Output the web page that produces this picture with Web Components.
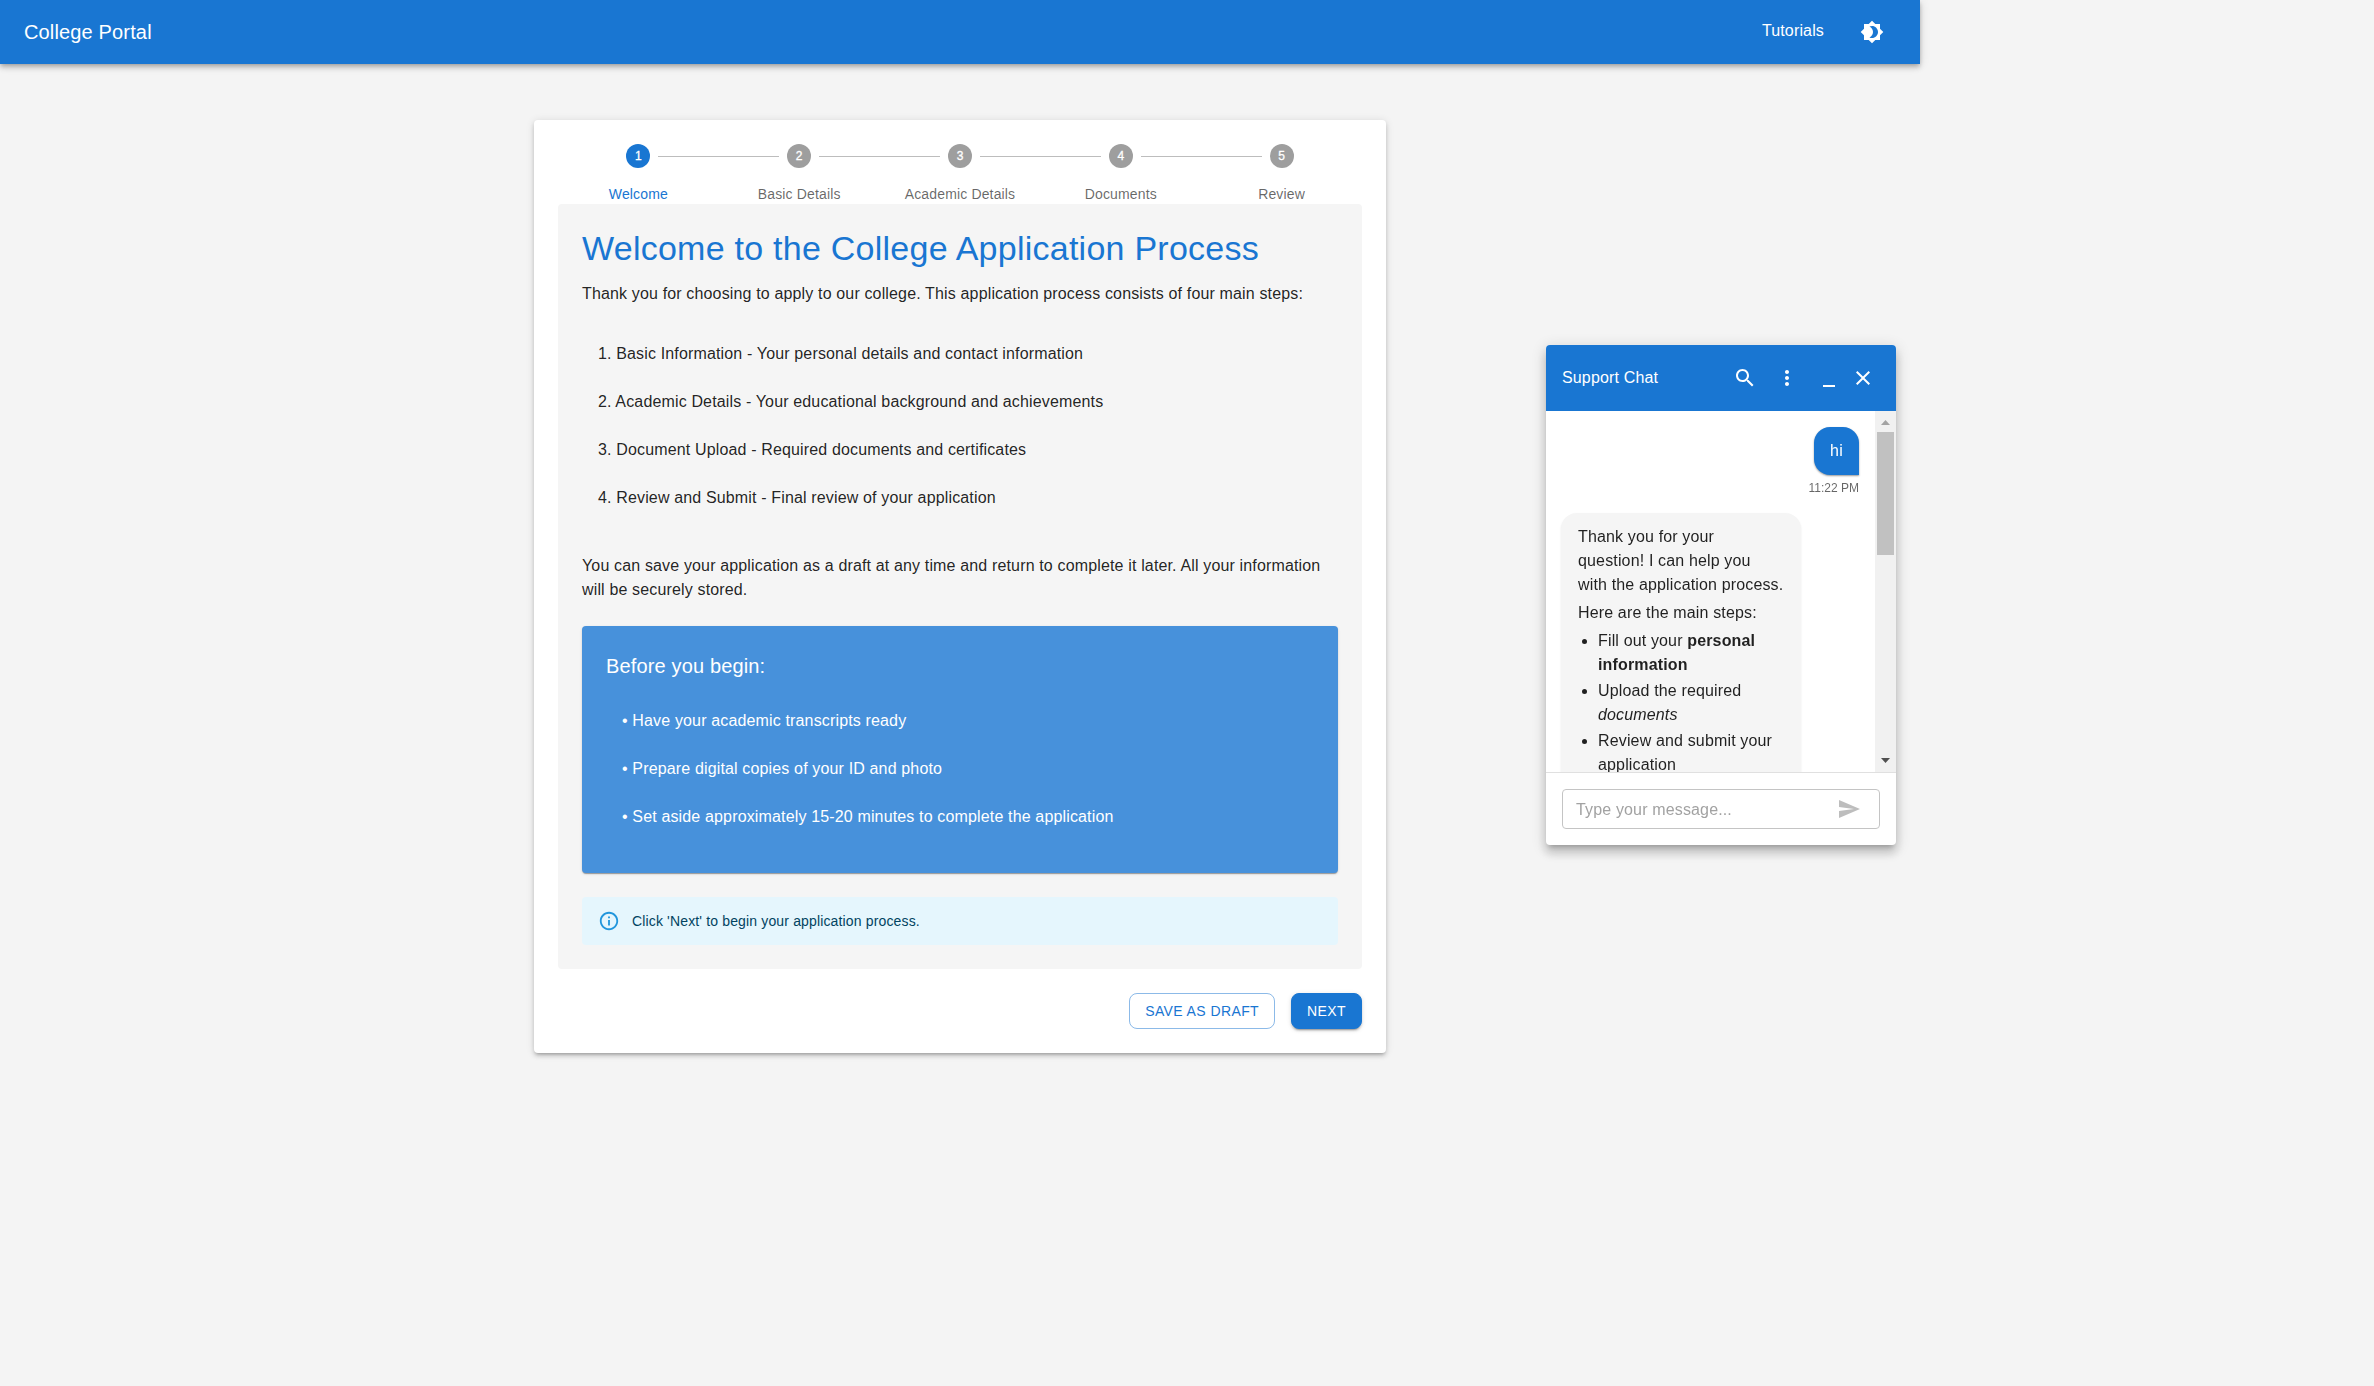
<!DOCTYPE html>
<html lang="en">
<head>
<meta charset="utf-8">
<title>College Portal</title>
<style>
html,body{margin:0;height:100%;background:#f4f4f4}
body{font:400 16px/24px "Liberation Sans",Arial,sans-serif;letter-spacing:.15px;color:rgba(0,0,0,.87);overflow:hidden}
</style>
</head>
<body>
<college-portal></college-portal>
<script>
const define=(name,css,html)=>customElements.define(name,class extends HTMLElement{
  constructor(){
    super();
    const root=this.attachShadow({mode:'open'});
    root.innerHTML=`<style>*{box-sizing:border-box}${css}</style>${typeof html==='function'?html(this):html}`;
  }
});

const ICONS={
  brightness:'M20 8.69V4h-4.69L12 .69 8.69 4H4v4.69L.69 12 4 15.31V20h4.69L12 23.31 15.31 20H20v-4.69L23.31 12 20 8.69zM12 18c-.89 0-1.74-.2-2.5-.55C11.56 16.5 13 14.42 13 12s-1.44-4.5-3.5-5.45C10.26 6.2 11.11 6 12 6c3.31 0 6 2.69 6 6s-2.69 6-6 6z',
  search:'M15.5 14h-.79l-.28-.27C15.41 12.59 16 11.11 16 9.5 16 5.91 13.09 3 9.5 3S3 5.91 3 9.5 5.91 16 9.5 16c1.61 0 3.09-.59 4.23-1.57l.27.28v.79l5 4.99L20.49 19l-4.99-5zm-6 0C7.01 14 5 11.99 5 9.5S7.01 5 9.5 5 14 7.01 14 9.5 11.99 14 9.5 14z',
  more:'M12 8c1.1 0 2-.9 2-2s-.9-2-2-2-2 .9-2 2 .9 2 2 2zm0 2c-1.1 0-2 .9-2 2s.9 2 2 2 2-.9 2-2-.9-2-2-2zm0 6c-1.1 0-2 .9-2 2s.9 2 2 2 2-.9 2-2-.9-2-2-2z',
  minimize:'M6 19h12v2H6z',
  close:'M19 6.41 17.59 5 12 10.59 6.41 5 5 6.41 10.59 12 5 17.59 6.41 19 12 13.41 17.59 19 19 17.59 13.41 12z',
  send:'M2.01 21 23 12 2.01 3 2 10l15 2-15 2z',
  info:'M11 7h2v2h-2zm0 4h2v6h-2zM12 2C6.48 2 2 6.48 2 12s4.48 10 10 10 10-4.48 10-10S17.52 2 12 2zm0 18c-4.41 0-8-3.59-8-8s3.59-8 8-8 8 3.59 8 8-3.59 8-8 8z'
};
define('ui-icon',':host{display:block;width:24px;height:24px;flex:none}svg{display:block;width:100%;height:100%;fill:currentColor}',
  el=>`<svg viewBox="0 0 24 24"><path d="${ICONS[el.getAttribute('name')]}"/></svg>`);

define('app-bar',`:host{display:flex;align-items:center;height:64px;padding:0 36px 0 24px;background:#1976d2;color:#fff;
  box-shadow:0 2px 4px -1px rgba(0,0,0,.2),0 4px 5px 0 rgba(0,0,0,.14),0 1px 10px 0 rgba(0,0,0,.12)}
  h6{margin:0;flex:1;font:inherit;font-size:20px;line-height:32px}
  a{margin-right:36px;padding-bottom:3px}`,
  `<h6>College Portal</h6><a>Tutorials</a><ui-icon name="brightness"></ui-icon>`);

define('step-item',`:host{flex:1;display:flex;flex-direction:column;align-items:center;gap:16px;color:rgba(0,0,0,.6);font-size:14px;line-height:20px}
  .row{display:flex;align-items:center;width:100%;gap:8px}
  i{flex:1;height:1px;background:#bdbdbd;margin-top:1px}
  i.none{background:none}
  b{display:flex;align-items:center;justify-content:center;width:24px;height:24px;border-radius:50%;background:#9e9e9e;color:#fff;font-size:12px;font-weight:400;letter-spacing:0;-webkit-text-stroke:.3px #fff}
  :host([active]){color:#1976d2} :host([active]) b{background:#1976d2}`,
  el=>{const n=+el.getAttribute('n');
    return `<div class="row"><i class="${n===1?'none':''}"></i><b>${n}</b><i class="${n===5?'none':''}"></i></div><slot></slot>`});

define('form-stepper',':host{display:flex}',
  `<step-item n="1" active>Welcome</step-item><step-item n="2">Basic Details</step-item><step-item n="3">Academic Details</step-item><step-item n="4">Documents</step-item><step-item n="5">Review</step-item>`);

define('list-row',':host{display:block;padding:12px 16px}','<slot></slot>');

define('notice-box',`:host{display:block;margin-top:24px;padding:24px 24px 32px;border-radius:4px;background:#4791db;color:#fff;
  box-shadow:0 2px 1px -1px rgba(0,0,0,.2),0 1px 1px 0 rgba(0,0,0,.14),0 1px 3px 0 rgba(0,0,0,.12)}
  h6{margin:0 0 15px;font:inherit;font-size:20px;line-height:32px}`,
  `<h6>Before you begin:</h6><slot></slot>`);

define('info-alert',`:host{display:flex;align-items:center;gap:12px;margin-top:24px;height:48px;padding:0 16px;border-radius:4px;background:#e5f6fd;color:#014361;font-size:14px;line-height:20px}
  ui-icon{width:22px;height:22px;color:#2196dc}`,'<ui-icon name="info"></ui-icon><slot></slot>');

define('welcome-panel',`:host{display:block;padding:24px;border-radius:4px;background:#f5f5f5}
  h4{margin:0 0 13.9px;font:inherit;font-size:34px;line-height:40px;letter-spacing:.25px;color:#1976d2}
  p{margin:0} .steps{margin:24px 0 32px}`,
  `<h4>Welcome to the College Application Process</h4>
  <p>Thank you for choosing to apply to our college. This application process consists of four main steps:</p>
  <div class="steps"><list-row>1. Basic Information - Your personal details and contact information</list-row>
  <list-row>2. Academic Details - Your educational background and achievements</list-row>
  <list-row>3. Document Upload - Required documents and certificates</list-row>
  <list-row>4. Review and Submit - Final review of your application</list-row></div>
  <p>You can save your application as a draft at any time and return to complete it later. All your information will be securely stored.</p>
  <notice-box><list-row>• Have your academic transcripts ready</list-row><list-row>• Prepare digital copies of your ID and photo</list-row><list-row>• Set aside approximately 15-20 minutes to complete the application</list-row></notice-box>
  <info-alert>Click 'Next' to begin your application process.</info-alert>`);

define('ui-button',`:host{display:flex;align-items:center;justify-content:center;height:36px;padding:0 15px;border:1px solid rgba(25,118,210,.5);border-radius:8px;color:#1976d2;font-size:14px;letter-spacing:.4px;text-transform:uppercase}
  :host([primary]){background:#1976d2;border-color:#1976d2;color:#fff;box-shadow:0 3px 1px -2px rgba(0,0,0,.2),0 2px 2px 0 rgba(0,0,0,.14),0 1px 5px 0 rgba(0,0,0,.12)}`,'<slot></slot>');

define('application-card',`:host{display:block;width:852px;padding:24px;border-radius:4px;background:#fff;
  box-shadow:0 3px 3px -2px rgba(0,0,0,.2),0 3px 4px 0 rgba(0,0,0,.14),0 1px 8px 0 rgba(0,0,0,.12)}
  .actions{display:flex;justify-content:flex-end;gap:16px;margin-top:24px}`,
  `<form-stepper></form-stepper><welcome-panel></welcome-panel>
  <div class="actions"><ui-button>Save as Draft</ui-button><ui-button primary>Next</ui-button></div>`);

define('chat-header',`:host{display:flex;align-items:center;height:66px;padding:0 21px 0 16px;background:#1976d2;color:#fff;border-radius:4px 4px 0 0}
  span{flex:1} ui-icon+ui-icon{margin-left:18px} ui-icon:last-child{margin-left:10px}`,
  `<span>Support Chat</span><ui-icon name="search"></ui-icon><ui-icon name="more"></ui-icon><ui-icon name="minimize"></ui-icon><ui-icon name="close"></ui-icon>`);

define('chat-bubble',`:host{display:block;width:240px;padding:12px 14px 12px 17px;border-radius:16px 16px 16px 0;background:#f5f5f5;
  box-shadow:0 1px 2px rgba(0,0,0,.1)}
  :host([own]){align-self:flex-end;width:45px;padding:12px 0;text-align:center;border-radius:16px 16px 0 16px;background:#1976d2;color:#fff;box-shadow:0 1px 2px rgba(0,0,0,.4)}`,'<slot></slot>');

define('chat-messages',`:host{display:flex;flex-direction:column;flex:1;min-width:0;padding:16px 16px 0 15px;overflow:hidden}
  time{align-self:flex-end;margin:3px 0 15px;font-size:12px;line-height:20px;color:rgba(0,0,0,.6);letter-spacing:0}
  p{margin:0 0 4px} ul{margin:0;padding-left:20px} li{margin-bottom:2px}`,
  `<chat-bubble own>hi</chat-bubble><time>11:22 PM</time>
  <chat-bubble><p>Thank you for your<br>question! I can help you<br>with the application process.</p><p>Here are the main steps:</p>
  <ul><li>Fill out your <b>personal</b> <b>information</b></li><li>Upload the required <em>documents</em></li><li>Review and submit your application</li></ul></chat-bubble>`);

define('scroll-track',`:host{display:flex;flex-direction:column;width:21px;background:#f1f1f1}
  svg{display:block;width:21px;height:21px;flex:none} .thumb{width:17px;height:123px;margin:0 2px;background:#c1c1c1} .rest{flex:1}`,
  `<svg><path d="M6 14h9l-4.5-5z" fill="#a3a3a3"/></svg><div class="thumb"></div><div class="rest"></div><svg><path d="M6 7h9l-4.5 5z" fill="#505050"/></svg>`);

define('chat-input',`:host{display:block;padding:16px;border-top:1px solid #e0e0e0}
  div{display:flex;align-items:center;justify-content:space-between;height:40px;padding:0 18px 0 13px;border:1px solid #c4c4c4;border-radius:4px;color:#a2a2a2}
  span{padding-top:2px}
  ui-icon{color:#bdbdbd}`,'<div><span>Type your message...</span><ui-icon name="send"></ui-icon></div>');

define('support-chat',`:host{display:flex;flex-direction:column;width:350px;height:500px;border-radius:4px;background:#fff;
  box-shadow:0 5px 5px -3px rgba(0,0,0,.2),0 8px 10px 1px rgba(0,0,0,.14),0 3px 14px 2px rgba(0,0,0,.12)}
  .body{display:flex;flex:1;min-height:0}`,
  `<chat-header></chat-header><div class="body"><chat-messages></chat-messages><scroll-track></scroll-track></div><chat-input></chat-input>`);

define('college-portal',`:host{display:block;width:1920px}
  main{display:flex;justify-content:center;padding-top:56px}
  support-chat{position:fixed;left:1546px;top:345px}`,
  `<app-bar></app-bar><main><application-card></application-card></main><support-chat></support-chat>`);
</script>
</body>
</html>
